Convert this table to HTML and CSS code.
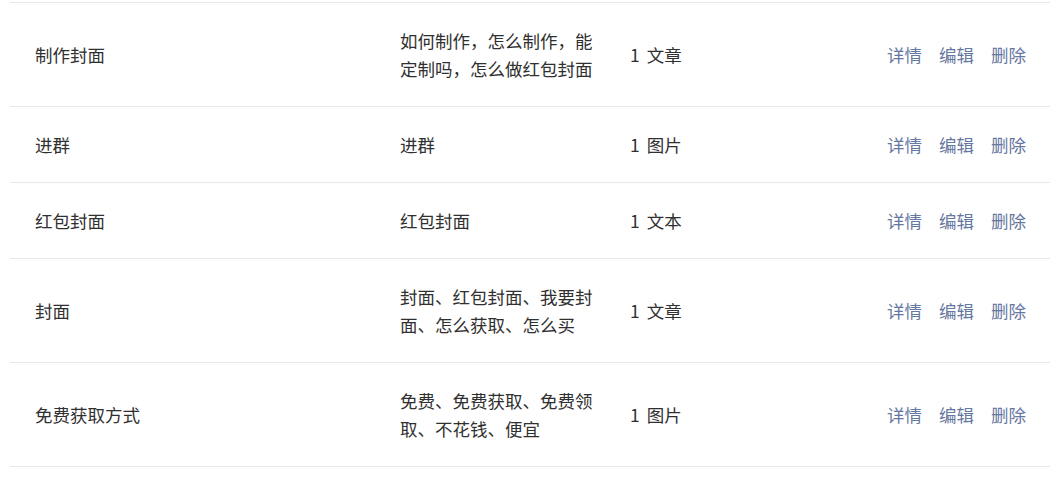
FILE: index.html
```html
<!DOCTYPE html>
<html lang="zh-CN">
<head>
<meta charset="utf-8">
<title>关键词回复</title>
<link rel="stylesheet" href="styles.css">
</head>
<body>
<div class="page">
  <div class="list">
    <div class="row">
      <div class="cell name">制作封面</div>
      <div class="cell keys">如何制作，怎么制作，能定制吗，怎么做红包封面</div>
      <div class="cell type">1 文章</div>
      <div class="cell ops"><a>详情</a><a>编辑</a><a>删除</a></div>
    </div>
    <div class="row">
      <div class="cell name">进群</div>
      <div class="cell keys">进群</div>
      <div class="cell type">1 图片</div>
      <div class="cell ops"><a>详情</a><a>编辑</a><a>删除</a></div>
    </div>
    <div class="row">
      <div class="cell name">红包封面</div>
      <div class="cell keys">红包封面</div>
      <div class="cell type">1 文本</div>
      <div class="cell ops"><a>详情</a><a>编辑</a><a>删除</a></div>
    </div>
    <div class="row">
      <div class="cell name">封面</div>
      <div class="cell keys">封面、红包封面、我要封面、怎么获取、怎么买</div>
      <div class="cell type">1 文章</div>
      <div class="cell ops"><a>详情</a><a>编辑</a><a>删除</a></div>
    </div>
    <div class="row">
      <div class="cell name">免费获取方式</div>
      <div class="cell keys">免费、免费获取、免费领取、不花钱、便宜</div>
      <div class="cell type">1 图片</div>
      <div class="cell ops"><a>详情</a><a>编辑</a><a>删除</a></div>
    </div>
  </div>
</div>
</body>
</html>
```

FILE: styles.css
```css
html, body {
  margin: 0;
  padding: 0;
  background: #ffffff;
}

.page {
  padding: 2px 6px 0 10px;
  font-family: "Noto Sans CJK SC", "Noto Sans", sans-serif;
  font-size: 17.5px;
  line-height: 28px;
  color: #303030;
}

.list {
  border-top: 1px solid #e8e8e8;
}

.row {
  display: grid;
  grid-template-columns: 390px 230px 1fr auto;
  align-items: center;
  border-bottom: 1px solid #e8e8e8;
  padding: 24px 0 23px;
}

.cell.name {
  padding-left: 25px;
}

.cell.keys {
  width: 200px;
}

.cell.type {
  word-spacing: 3px;
}

.cell.ops {
  display: flex;
  gap: 17px;
  padding-right: 24px;
}

.cell.ops a {
  color: #6677a0;
  cursor: pointer;
}
```
